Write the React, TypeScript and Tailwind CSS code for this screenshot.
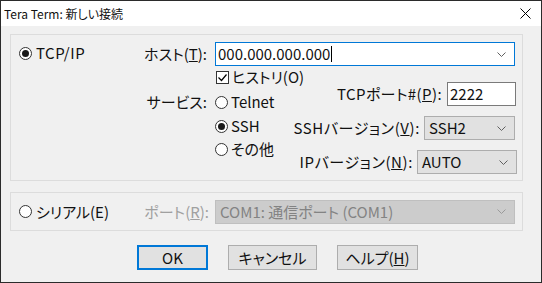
import React from "react";

function Radio({ checked }: { checked?: boolean }) {
  return (
    <span className="w-[13px] h-[13px] rounded-full border border-[#333333] bg-white flex items-center justify-center shrink-0">
      {checked && <span className="w-[7px] h-[7px] rounded-full bg-[#1a1a1a]" />}
    </span>
  );
}

function Chevron({ color = "#606060" }: { color?: string }) {
  return (
    <svg width="9" height="5" viewBox="0 0 9 5" className="shrink-0">
      <polyline points="0.5,0.5 4.5,4.5 8.5,0.5" fill="none" stroke={color} strokeWidth="1" />
    </svg>
  );
}

function Select({ value, w }: { value: string; w: string }) {
  return (
    <div className={`${w} h-[24px] bg-[#e1e1e1] border border-[#adadad] flex items-center justify-between pl-[4px] pr-[8px]`}>
      <span>{value}</span>
      <Chevron />
    </div>
  );
}

export default function App() {
  return (
    <div className="w-[542px] h-[283px] border border-[#2b2b2b] bg-[#f0f0f0] flex flex-col font-['Yu_Gothic_UI','Noto_Sans_CJK_JP',sans-serif] [font-feature-settings:'palt'] text-[15px] leading-[20px] text-[#111111] overflow-hidden whitespace-nowrap">
      <div className="h-[25px] shrink-0 bg-white flex items-center justify-between pl-[3px] pr-[10px] text-[12px]">
        <span>Tera Term: 新しい接続</span>
        <svg width="11" height="11" viewBox="0 0 11 11">
          <line x1="0.5" y1="0.5" x2="10.5" y2="10.5" stroke="#000" strokeWidth="1" />
          <line x1="10.5" y1="0.5" x2="0.5" y2="10.5" stroke="#000" strokeWidth="1" />
        </svg>
      </div>
      <div className="pl-[9px] pt-[8px] flex flex-col">
        {/* TCP/IP group */}
        <div className="w-[513px] h-[147px] border border-[#dcdcdc] flex">
          <div className="w-[119px] pl-[8px] pt-[8px] shrink-0">
            <div className="flex items-center gap-[4px] h-[20px]">
              <Radio checked />
              <span className="tracking-[0.5px]">TCP/IP</span>
            </div>
          </div>
          <div className="flex-1 flex flex-col pt-[7px]">
            <div className="flex items-center">
              <span className="w-[77px] text-right">
                ホスト(<span className="underline">T</span>):
              </span>
              <div className="ml-[8px] w-[300px] h-[24px] bg-white border border-[#0078d7] flex items-center justify-between pl-[2px] pr-[8px]">
                <span className="flex items-center">
                  000.000.000.000<span className="w-[1px] h-[16px] bg-black ml-[1px]" />
                </span>
                <Chevron />
              </div>
            </div>
            <div className="flex">
              <div className="w-[85px] shrink-0 pr-[8px] text-right mt-[26px]">サービス:</div>
              <div className="w-[70px] shrink-0 flex flex-col">
                <div className="flex items-center gap-[3px] h-[20px] mt-[1px] pl-[1px]">
                  <span className="w-[13px] h-[13px] shrink-0 border border-[#333333] bg-white flex items-center justify-center">
                    <svg width="11" height="11" viewBox="0 0 11 11">
                      <polyline points="1.5,5.5 4.5,8.5 9.5,2.5" fill="none" stroke="#000" strokeWidth="1.2" />
                    </svg>
                  </span>
                  <span>ヒストリ(O)</span>
                </div>
                <div className="flex items-center gap-[3px] h-[20px] mt-[5px]">
                  <Radio />
                  <span>Telnet</span>
                </div>
                <div className="flex items-center gap-[3px] h-[20px] mt-[4px]">
                  <Radio checked />
                  <span>SSH</span>
                </div>
                <div className="flex items-center gap-[3px] h-[20px] mt-[3px]">
                  <Radio />
                  <span>その他</span>
                </div>
              </div>
              <div className="flex-1 flex flex-col items-end mt-[16px]">
                <div className="flex items-center mr-[6px]">
                  <span className="tracking-[0.4px]">
                    TCPポート#(<span className="underline">P</span>):
                  </span>
                  <div className="ml-[5px] w-[69px] h-[24px] bg-white border border-[#7a7a7a] flex items-center pl-[2px]">
                    2222
                  </div>
                </div>
                <div className="flex items-center mr-[7px] mt-[10px]">
                  <span className="tracking-[0.6px]">
                    SSHバージョン(<span className="underline">V</span>):
                  </span>
                  <div className="ml-[4px]">
                    <Select value="SSH2" w="w-[91px]" />
                  </div>
                </div>
                <div className="flex items-center mr-[5px] mt-[10px]">
                  <span className="tracking-[0.6px]">
                    IPバージョン(<span className="underline">N</span>):
                  </span>
                  <div className="ml-[4px]">
                    <Select value="AUTO" w="w-[100px]" />
                  </div>
                </div>
              </div>
            </div>
          </div>
        </div>
        {/* Serial group */}
        <div className="mt-[11px] w-[513px] h-[39px] border border-[#dcdcdc] flex items-center">
          <div className="w-[119px] pl-[8px] shrink-0 flex items-center gap-[4px]">
            <Radio />
            <span>シリアル(E)</span>
          </div>
          <span className="w-[79px] text-right text-[#a0a0a0]">
            ポート(<span className="underline">R</span>):
          </span>
          <div className="ml-[6px] w-[300px] h-[24px] bg-[#cccccc] border border-[#bfbfbf] flex items-center justify-between pl-[4px] pr-[8px] text-[#838383]">
            <span>COM1: 通信ポート (COM1)</span>
            <Chevron color="#9a9a9a" />
          </div>
        </div>
        {/* Buttons */}
        <div className="flex mt-[14px] pl-[127px] gap-[20px]">
          <div className="w-[71px] h-[25px] bg-[#e1e1e1] border-2 border-[#0078d7] flex items-center justify-center">OK</div>
          <div className="w-[89px] h-[25px] bg-[#e1e1e1] border border-[#adadad] flex items-center justify-center">キャンセル</div>
          <div className="w-[81px] h-[25px] bg-[#e1e1e1] border border-[#adadad] flex items-center justify-center">
            ヘルプ(<span className="underline">H</span>)
          </div>
        </div>
      </div>
    </div>
  );
}
